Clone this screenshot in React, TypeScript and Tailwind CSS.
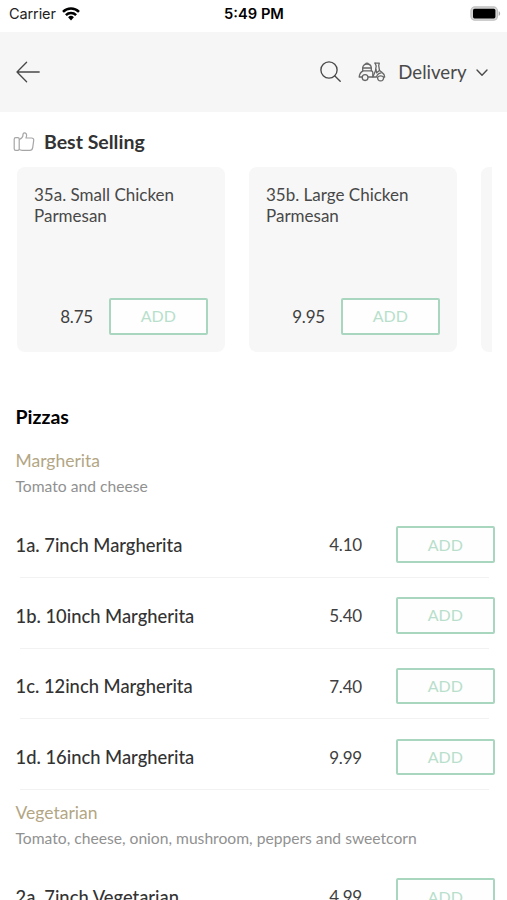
const BEST_SELLING = [
  { name: "35a. Small Chicken Parmesan", price: "8.75" },
  { name: "35b. Large Chicken Parmesan", price: "9.95" },
];

const PIZZAS = [
  {
    title: "Margherita",
    description: "Tomato and cheese",
    items: [
      { name: "1a. 7inch Margherita", price: "4.10" },
      { name: "1b. 10inch Margherita", price: "5.40" },
      { name: "1c. 12inch Margherita", price: "7.40" },
      { name: "1d. 16inch Margherita", price: "9.99" },
    ],
  },
  {
    title: "Vegetarian",
    description: "Tomato, cheese, onion, mushroom, peppers and sweetcorn",
    items: [{ name: "2a. 7inch Vegetarian", price: "4.99" }],
  },
];

function WifiIcon() {
  return (
    <svg width="18" height="14" viewBox="0 0 18 14" fill="none" stroke="#000" strokeWidth="2.5">
      <path d="M1 4.9a11.4 11.4 0 0 1 16 0" />
      <path d="M3.9 8.1a7.2 7.2 0 0 1 10.2 0" />
      <path d="M6.1 10.3a4.1 4.1 0 0 1 5.8 0L9 13.4z" fill="#000" stroke="none" />
    </svg>
  );
}

function BatteryIcon() {
  return (
    <svg width="31" height="16" viewBox="0 0 31 16">
      <rect x="0.9" y="0.9" width="26.6" height="13.4" rx="4" fill="#d4d4d4" stroke="#c0c0c0" strokeWidth="1.1" />
      <rect x="3" y="2.8" width="22.4" height="9.6" rx="1.6" fill="#000" />
      <path d="M28.7 5.3c1.9.6 1.9 4 0 4.6z" fill="#a8a8a8" />
    </svg>
  );
}

function BackIcon() {
  return (
    <svg width="24" height="22" viewBox="0 0 24 22" fill="none" stroke="#484848" strokeWidth="1.3" strokeLinecap="round" strokeLinejoin="round">
      <path d="M23.2 11H1M10.6 1.2L1 11l9.6 9.8" />
    </svg>
  );
}

function SearchIcon() {
  return (
    <svg width="21" height="21" viewBox="0 0 21 21" fill="none" stroke="#4a4a4a" strokeWidth="1.35" strokeLinecap="round">
      <circle cx="9" cy="9" r="8.1" />
      <path d="M14.9 14.9l5.3 5.3" />
    </svg>
  );
}

function ScooterIcon() {
  return (
    <svg width="28" height="20" viewBox="0 0 28 20" fill="none" stroke="#666" strokeWidth="1.3" strokeLinecap="round" strokeLinejoin="round">
      {/* delivery box */}
      <path d="M4.7 8.8V6.3c0-2.7 1.6-4.3 4.3-4.3s4.3 1.6 4.3 4.3v2.5" />
      <path d="M4.7 6h8.6M7.9 1.8c0-1 2.2-1 2.2 0" />
      {/* seat and rear body */}
      <path d="M10.2 15h4.6v-4.4c0-1.1-.6-1.7-1.6-1.7H5.2C3 9.9 1.4 12.2 1.2 15h2.9" />
      {/* front column and fender */}
      <path d="M17 1.1h4.3l-.6 2.6.8 4.7 2.7 2.2c1.6 1 2.5 2.5 2.5 4.4h-1" />
      <path d="M17 1.1l1.2 2.8-.8 5.1-2.6 6h3.8c.3-2.3 1.9-3.8 4.6-4.2" />
      <path d="M18 7.5l.6 3.3 2.9-2.4" />
      <circle cx="7.1" cy="15.6" r="2.9" />
      <path d="M19.7 15.2a3 3 0 1 0 5.8 0c-1-1.8-4.6-1.8-5.8 0z" />
    </svg>
  );
}

function ChevronIcon() {
  return (
    <svg width="12" height="8" viewBox="0 0 12 8" fill="none" stroke="#4a4a4a" strokeWidth="1.4" strokeLinecap="round" strokeLinejoin="round">
      <path d="M1 1l5 5.2L11 1" />
    </svg>
  );
}

function ThumbIcon() {
  return (
    <svg width="22" height="20" viewBox="0 0 22 20" fill="none" stroke="#a6a6a6" strokeWidth="1.2" strokeLinejoin="round">
      <path d="M2.8 5.6h2.1c.9 0 1.3.5 1.3 1.3v10.2c0 .9-.4 1.3-1.3 1.3H2.8c-1 0-1.6-.6-1.6-1.6V7.2c0-1 .6-1.6 1.6-1.6z" />
      <path d="M6.2 7.5c2.3-.9 3.7-2.4 3.8-4.6 0-1.3.5-2 1.4-2 1.5 0 2.3 1.2 2.2 2.8-.1.9-.4 1.6-.7 2.3h5.7c1.4 0 2.3 1 2.1 2.3l-1 7.3c-.3 1.8-1.3 2.7-2.9 2.7H9.2c-1.3 0-2.2-.2-3-.9" />
    </svg>
  );
}

function AddButton() {
  return (
    <button className="h-[36.5px] w-[98.5px] shrink-0 rounded-[2px] border-2 border-[#a9d6bf] bg-[#fdfefd] text-base leading-none text-[#b9dfcc]">
      ADD
    </button>
  );
}

function ProductCard({ name, price }: { name: string; price: string }) {
  return (
    <div className="flex h-[185px] w-[207.5px] shrink-0 flex-col justify-between rounded-lg bg-[#f7f7f7] pt-[18px] pr-[17px] pb-[17.5px] pl-[17px]">
      <p className="w-[160px] text-[17px] leading-[20.5px] text-[#484848]">{name}</p>
      <div className="flex items-center justify-end gap-4">
        <span className="pt-px text-[17px] tracking-[-0.2px] text-[#404040]">{price}</span>
        <AddButton />
      </div>
    </div>
  );
}

export default function App() {
  return (
    <div className="h-[900px] w-[507px] overflow-hidden bg-white font-['Lato',sans-serif] text-[#333]">
      {/* status bar */}
      <div className="grid h-8 grid-cols-3 items-center pb-[5px] pl-[9px] pr-[6px] font-['Inter',sans-serif] text-black">
        <div className="flex items-center gap-[6px] text-[14.5px] tracking-[-0.1px] text-[#222]">
          Carrier
          <WifiIcon />
        </div>
        <span className="-ml-[2px] pt-px text-center text-[14.7px] font-semibold">5:49 PM</span>
        <div className="flex justify-end">
          <BatteryIcon />
        </div>
      </div>

      <header className="flex h-20 items-center bg-[#f6f6f6] pl-4 pr-[19px]">
        <BackIcon />
        <div className="ml-auto flex items-center">
          <SearchIcon />
          <div className="ml-[17px]">
            <ScooterIcon />
          </div>
          <span className="ml-3 mr-[9.5px] pt-[2px] text-[18.6px] text-[#4a4a4a]">Delivery</span>
          <div className="pt-[3px]">
            <ChevronIcon />
          </div>
        </div>
      </header>

      <section className="h-[240px] pt-4">
        <h2 className="flex h-[27px] items-center gap-[9px] pl-[13px] text-[19.5px] font-bold">
          <ThumbIcon />
          Best Selling
        </h2>
        <div className="ml-[17px] mr-[15px] mt-3 flex gap-[24.5px] overflow-hidden">
          {BEST_SELLING.map((item) => (
            <ProductCard key={item.name} {...item} />
          ))}
          {/* next card peeking in */}
          <div className="h-[185px] w-[207.5px] shrink-0 rounded-lg bg-[#f7f7f7]" />
        </div>
      </section>

      <main className="pl-[15.5px] pr-[12.5px] pt-[50px]">
        <h2 className="h-[30px] text-[19.5px] font-bold leading-[30px] text-black">Pizzas</h2>
        <div className="flex flex-col gap-[7px] pt-[13.4px]">
          {PIZZAS.map((group) => (
            <section key={group.title}>
              <div className="h-[62px] pt-[3px]">
                <h3 className="h-[26px] text-[17.5px] leading-[26px] text-[#b3a684]">{group.title}</h3>
                <p className="h-[26px] text-[15.65px] leading-[25px] text-[#919191]">{group.description}</p>
              </div>
              {group.items.map((item) => (
                <div key={item.name} className="flex h-[70.75px] flex-col pt-[19px]">
                  <div className="flex h-[36.5px] items-center">
                    <span className="grow pt-[2px] text-[18.35px] font-medium">{item.name}</span>
                    <span className="mr-[34px] pt-px text-[17px] tracking-[-0.2px] text-[#404040]">{item.price}</span>
                    <AddButton />
                  </div>
                  <div className="ml-1 mr-[6px] mt-[14px] border-t border-[#f2f2f2]" />
                </div>
              ))}
            </section>
          ))}
        </div>
      </main>
    </div>
  );
}
